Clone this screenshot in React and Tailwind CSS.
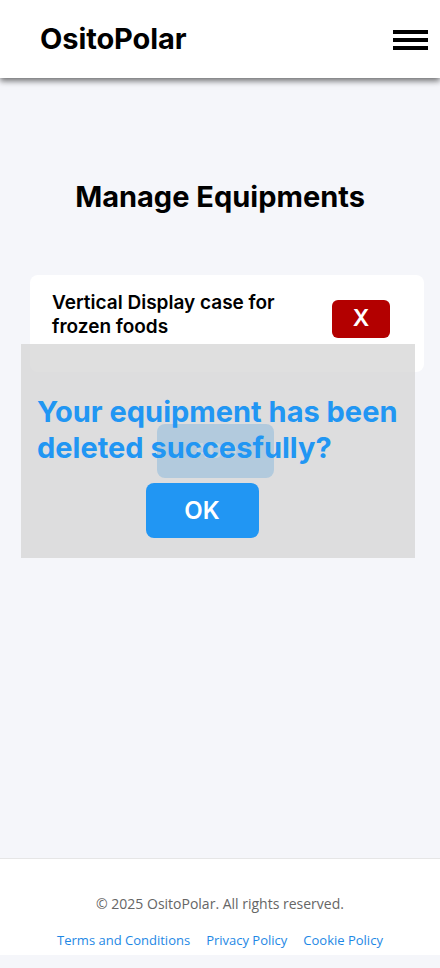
export default function App() {
  return (
    <div className="flex min-h-screen flex-col bg-[#f5f6fa] font-['Inter',sans-serif]">
      <header className="relative z-10 flex h-[78px] items-center justify-between bg-white pl-10 pr-3 shadow-[0_3px_6px_rgba(0,0,0,0.55)]">
        <h1 className="text-[29px] font-bold tracking-[-0.1px] text-black">OsitoPolar</h1>
        <button className="flex w-[35px] flex-col gap-1 pt-0.5" aria-label="Menu">
          <span className="h-1 w-full bg-black" />
          <span className="h-1 w-full bg-black" />
          <span className="h-1 w-full bg-black" />
        </button>
      </header>

      <main className="relative flex h-[780px] flex-col items-center pt-[97px]">
        <h2 className="text-[29px] font-bold text-black">Manage Equipments</h2>

        <div className="mt-[56px] ml-[30px] flex w-[394px] items-start justify-between self-start rounded-lg bg-white pb-[33px] pl-[22px] pr-[34px] pt-[16px]">
          <p className="w-[260px] text-[19px] font-semibold leading-[24px] text-black">
            Vertical Display case for frozen foods
          </p>
          <button className="mt-[9px] flex h-[38px] w-[58px] items-center justify-center rounded-md bg-[#b30000] text-[23px] font-semibold text-white">
            X
          </button>
        </div>

        <button className="ml-[-9px] mt-[52px] h-[54px] w-[117px] rounded-lg bg-[#2196f3] text-[20px] font-semibold text-white/50">
          ADD
        </button>

        <div className="absolute left-[21px] top-[266px] flex h-[214px] w-[394px] flex-col items-center bg-[rgba(215,215,215,0.8)] px-4 pt-[50px]">
          <p className="w-full text-[29px] font-bold leading-[36px] text-[#2196f3]">
            Your equipment has been deleted succesfully?
          </p>
          <button className="mr-[32px] mt-[17px] h-[55px] w-[113px] rounded-lg bg-[#2196f3] text-[24px] font-semibold text-white">
            OK
          </button>
        </div>
      </main>

      <footer className="flex h-[97px] flex-col items-center border-t border-[#e6e6e6] bg-white pt-[34px] font-['Open_Sans',sans-serif]">
        <p className="text-[14px] text-[#666]">© 2025 OsitoPolar. All rights reserved.</p>
        <nav className="mt-[17px] flex gap-4 text-[13px] text-[#1e88e5]">
          <a href="#">Terms and Conditions</a>
          <a href="#">Privacy Policy</a>
          <a href="#">Cookie Policy</a>
        </nav>
      </footer>
    </div>
  );
}
